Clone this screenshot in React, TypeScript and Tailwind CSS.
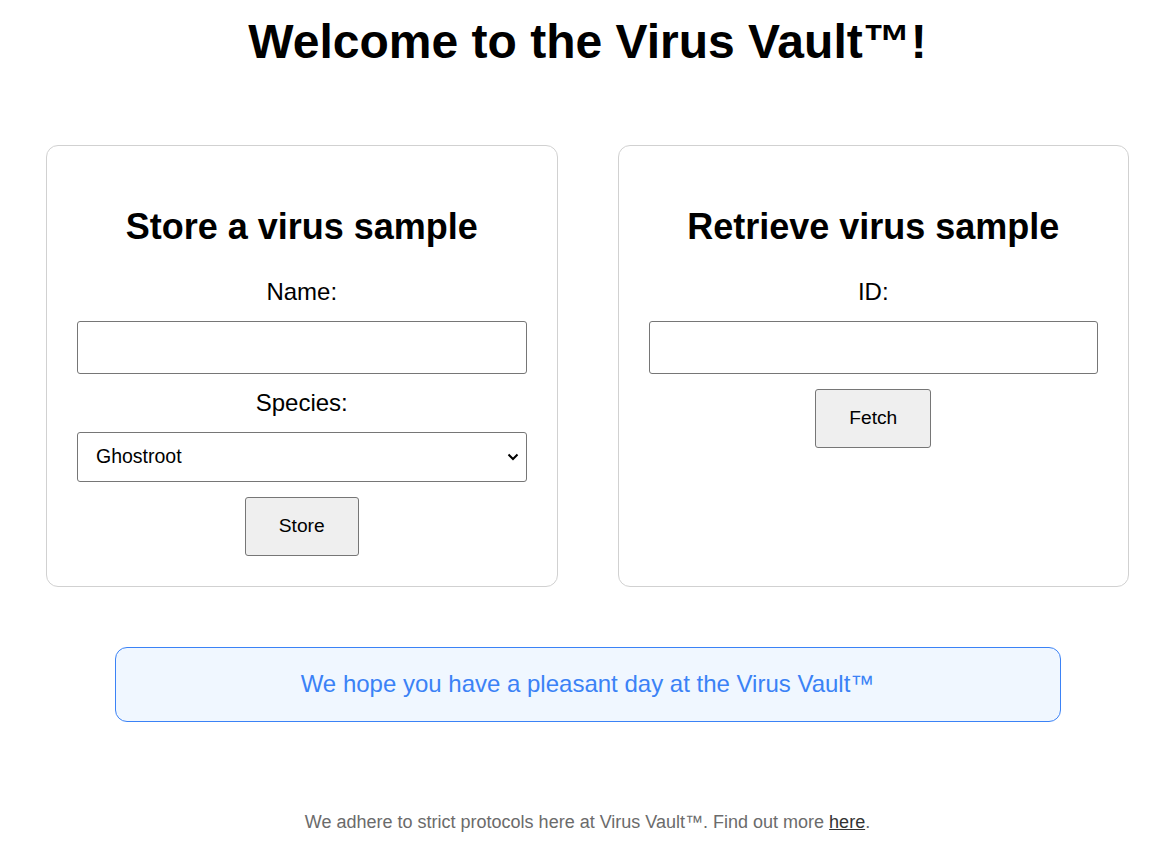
import React from "react";

export default function App() {
  return (
    <div
      className="min-h-[857px] bg-white pl-4 text-black"
      style={{ fontFamily: '"Liberation Sans", Arial, sans-serif' }}
    >
      <h1 className="pt-[14px] text-center text-[48px] font-bold leading-[1.15]">
        Welcome to the Virus Vault™!
      </h1>

      <div className="mt-[76px] grid grid-cols-2 gap-[60px] px-[30px]">
        <div className="flex flex-col items-center rounded-[12px] border border-[#d1d1d1] p-[30px]">
          <h2 className="mt-[30px] mb-[30px] text-[36px] font-bold leading-[1.15]">
            Store a virus sample
          </h2>
          <label className="text-[24px] leading-[1.15]">Name:</label>
          <input
            type="text"
            className="mt-[16px] h-[53px] w-full rounded-[3px] border border-[#767676] bg-white px-4 text-[19.2px] outline-none"
          />
          <label className="mt-[15px] text-[24px] leading-[1.15]">Species:</label>
          <div className="relative mt-[15px] w-full">
            <select
              defaultValue="Ghostroot"
              className="h-[50px] w-full appearance-none rounded-[3px] border border-[#767676] bg-white pl-[18px] text-[19.5px] text-black outline-none"
            >
              <option>Ghostroot</option>
            </select>
            <svg
              className="pointer-events-none absolute right-[8px] top-[21px]"
              width="12"
              height="8"
              viewBox="0 0 12 8"
              fill="none"
            >
              <path d="M1.5 1.5 L6 6 L10.5 1.5" stroke="#000" strokeWidth="2" />
            </svg>
          </div>
          <button className="mt-[15px] h-[59px] w-[114px] rounded-[3px] border border-[#767676] bg-[#efefef] text-[19.2px]">
            Store
          </button>
        </div>

        <div className="flex flex-col items-center rounded-[12px] border border-[#d1d1d1] p-[30px]">
          <h2 className="mt-[30px] mb-[30px] text-[36px] font-bold leading-[1.15]">
            Retrieve virus sample
          </h2>
          <label className="text-[24px] leading-[1.15]">ID:</label>
          <input
            type="text"
            className="mt-[16px] h-[53px] w-full rounded-[3px] border border-[#767676] bg-white px-4 text-[19.2px] outline-none"
          />
          <button className="mt-[15px] h-[59px] w-[116px] rounded-[3px] border border-[#767676] bg-[#efefef] text-[19.2px]">
            Fetch
          </button>
        </div>
      </div>

      <div className="mx-auto mt-[60px] flex h-[75px] w-[946px] items-center justify-center rounded-[12px] border border-[#3b82f6] bg-[#f0f7ff] text-[24px] text-[#3b82f6]">
        We hope you have a pleasant day at the Virus Vault™
      </div>

      <p className="mt-[90px] text-center text-[18px] leading-[1.15] text-[#6b6b6b]">
        We adhere to strict protocols here at Virus Vault™. Find out more{" "}
        <a href="#" className="text-[#333] underline">
          here
        </a>
        .
      </p>
    </div>
  );
}
